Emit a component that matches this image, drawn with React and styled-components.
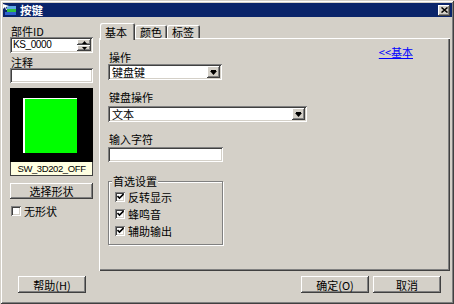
import React from 'react';
import styled, { createGlobalStyle } from 'styled-components';

const Global = createGlobalStyle`
  html, body { margin: 0; padding: 0; background: #d4d0c8; }
  body { font-family: "Noto Sans CJK SC", "Noto Sans", sans-serif; font-size: 11px; color: #000; }
  * { box-sizing: border-box; }
`;

const raised = `box-shadow: inset -1px -1px #404040, inset 1px 1px #fff, inset -2px -2px #808080, inset 2px 2px #d4d0c8;`;
const sunken = `box-shadow: inset 1px 1px #808080, inset -1px -1px #fff, inset 2px 2px #404040, inset -2px -2px #d4d0c8;`;

const Window = styled.div`
  width: 454px;
  height: 304px;
  padding: 3px 2px 2px 3px;
  background: #d4d0c8;
  box-shadow: inset 1px 1px #d4d0c8, inset -1px -1px #404040, inset 2px 2px #fff, inset -2px -2px #808080;
  display: flex;
  flex-direction: column;
`;

const TitleBar = styled.div`
  height: 14px;
  flex: none;
  background: #0a246a;
  display: flex;
  align-items: center;
  padding-right: 2px;
`;

const AppIcon = styled.svg`
  width: 14px;
  height: 12px;
  margin-right: 3px;
  flex: none;
`;

const TitleText = styled.div`
  flex: 1;
  color: #fff;
  font-weight: bold;
  font-size: 11.5px;
  line-height: 14px;
`;

const CloseButton = styled.div`
  width: 12px;
  height: 11px;
  background: #d4d0c8;
  ${raised}
  display: flex;
  align-items: center;
  justify-content: center;
`;

const Main = styled.div`
  height: 254px;
  flex: none;
  display: flex;
  padding: 6px 2px 0 7px;
`;

const LeftColumn = styled.div`
  width: 83px;
  flex: none;
  margin-right: 6px;
  padding-top: 2px;
  display: flex;
  flex-direction: column;
`;

const Label = styled.div`
  line-height: 12px;
  height: 12px;
  padding-left: 1px;
  margin-top: ${p => p.$mt || 0}px;
  white-space: nowrap;
`;

const SpinField = styled.div`
  height: 16px;
  background: #fff;
  ${sunken}
  display: flex;
  padding: 2px;
`;

const SpinText = styled.div`
  flex: 1;
  font-family: "Liberation Sans", Arial, sans-serif;
  font-size: 10px;
  letter-spacing: -0.4px;
  line-height: 12px;
  padding-left: 1px;
`;

const SpinButtons = styled.div`
  width: 14px;
  display: flex;
  flex-direction: column;
`;

const SpinBtn = styled.div`
  height: 6px;
  background: #d4d0c8;
  ${raised}
  display: flex;
  align-items: center;
  justify-content: center;
`;

const TextField = styled.div`
  height: 15px;
  width: ${p => (p.$w ? `${p.$w}px` : '100%')};
  margin-top: ${p => p.$mt || 0}px;
  background: #fff;
  ${sunken}
`;

const Preview = styled.div`
  margin-top: 5px;
  display: flex;
  flex-direction: column;
`;

const PreviewArea = styled.div`
  height: 74px;
  background: #000;
  display: flex;
  align-items: center;
  justify-content: center;
`;

const GreenKey = styled.div`
  width: 54px;
  height: 55px;
  background: #00ff00;
  border-top: 1px solid #fff;
  border-left: 2px solid #fff;
  margin-left: -3px;
`;

const ShapeName = styled.div`
  height: 14px;
  background: #ffffe1;
  border: 1px solid #404040;
  border-top: none;
  font-family: "Liberation Sans", Arial, sans-serif;
  font-size: 9.5px;
  letter-spacing: -0.4px;
  line-height: 13px;
  text-align: center;
`;

const Button = styled.div`
  width: ${p => (p.$w ? `${p.$w}px` : '100%')};
  height: ${p => p.$h || 17}px;
  margin-top: ${p => p.$mt || 0}px;
  margin-left: ${p => (p.$auto ? 'auto' : '0')};
  background: #d4d0c8;
  ${raised}
  display: flex;
  align-items: center;
  justify-content: center;
  line-height: 12px;
  white-space: nowrap;
`;

const CheckRow = styled.div`
  display: flex;
  align-items: center;
  height: ${p => p.$h || 17}px;
  margin-top: ${p => p.$mt || 0}px;
  padding-left: ${p => p.$pl || 0}px;
  line-height: 12px;
  white-space: nowrap;
`;

const CheckBox = styled.div`
  width: 10px;
  height: 10px;
  flex: none;
  margin-right: 3px;
  background: #fff;
  ${sunken}
  display: flex;
  align-items: center;
  justify-content: center;
`;

const TabArea = styled.div`
  width: 351px;
  flex: none;
  display: flex;
  flex-direction: column;
`;

const TabStrip = styled.div`
  height: 15px;
  display: flex;
  align-items: flex-start;
  padding-left: 1px;
  position: relative;
  z-index: 1;
`;

const Tab = styled.div`
  width: ${p => p.$w}px;
  height: ${p => (p.$active ? 17 : 13)}px;
  margin-top: ${p => (p.$active ? 0 : 2)}px;
  padding: ${p => (p.$active ? 4 : 2)}px 0 0 5px;
  background: #d4d0c8;
  border-radius: 2px 2px 0 0;
  box-shadow: inset 1px 1px #fff, inset -1px 0 #404040, inset -2px 0 #808080;
  line-height: 11px;
  white-space: nowrap;
`;

const Panel = styled.div`
  height: 233px;
  background: #d4d0c8;
  box-shadow: inset 1px 1px #fff, inset -1px -1px #404040, inset -2px -2px #808080;
  display: flex;
  padding: 8px 0 0 9px;
`;

const FormColumn = styled.div`
  padding-top: 5px;
  display: flex;
  flex-direction: column;
  align-items: flex-start;
`;

const Combo = styled.div`
  width: ${p => p.$w}px;
  height: 16px;
  margin-top: ${p => p.$mt || 0}px;
  background: #fff;
  ${sunken}
  display: flex;
  padding: 2px;
`;

const ComboText = styled.div`
  flex: 1;
  line-height: 12px;
  padding-left: 2px;
`;

const DropButton = styled.div`
  width: 13px;
  height: 12px;
  background: #d4d0c8;
  ${raised}
  display: flex;
  align-items: center;
  justify-content: center;
`;

const Group = styled.fieldset`
  margin: 13px 0 0;
  width: 115px;
  min-width: 0;
  padding: 0 0 5px 3px;
  border: 1px solid #808080;
  box-shadow: inset 1px 1px #fff, 1px 1px #fff;
`;

const Legend = styled.legend`
  padding: 0 1px;
  line-height: 12px;
  background: #d4d0c8;
`;

const CheckList = styled.div`
  padding: 1px 0 0 3px;
`;

const LinkColumn = styled.div`
  margin-left: auto;
  margin-right: 37px;
`;

const Link = styled.a`
  color: #0000ff;
  text-decoration: underline;
  line-height: 12px;
  display: block;
  cursor: pointer;
`;

const Footer = styled.div`
  height: 17px;
  flex: none;
  margin-top: 5px;
  display: flex;
  gap: 4px;
  padding: 0 11px 0 15px;
`;

const Arrow = ({ up }) => (
  <svg width="5" height="3" viewBox="0 0 5 3">
    <polygon points={up ? '2.5,0 5,3 0,3' : '0,0 5,0 2.5,3'} fill="#000" />
  </svg>
);

const DownArrow = () => (
  <svg width="7" height="5" viewBox="0 0 7 5">
    <polygon points="0,1 7,1 3.5,5" fill="#000" />
    <rect x="1" y="0" width="5" height="1" fill="#000" />
  </svg>
);

const Check = () => (
  <svg width="7" height="7" viewBox="0 0 7 7">
    <polyline points="0.5,3 2.5,5 6.5,1" fill="none" stroke="#000" strokeWidth="1.6" />
  </svg>
);

const Box = ({ checked }) => <CheckBox>{checked && <Check />}</CheckBox>;

export default function App() {
  return (
    <>
      <Global />
      <Window>
        <TitleBar>
          <AppIcon viewBox="0 0 14 12">
            <rect x="4" y="2" width="9" height="3" fill="#5fa8e8" />
            <rect x="4" y="5" width="9" height="3" fill="#30c040" />
            <rect x="2" y="8" width="11" height="3" fill="#3060d0" />
            <polygon points="0,0 6,2 3,3 4,6 3,6 2,3 0,5" fill="#fff" />
          </AppIcon>
          <TitleText>按键</TitleText>
          <CloseButton>
            <svg width="7" height="6" viewBox="0 0 7 6">
              <path d="M0.5 0.5 L6.5 5.5 M6.5 0.5 L0.5 5.5" stroke="#000" strokeWidth="1.5" />
            </svg>
          </CloseButton>
        </TitleBar>

        <Main>
          <LeftColumn>
            <Label>部件ID</Label>
            <SpinField>
              <SpinText>KS_0000</SpinText>
              <SpinButtons>
                <SpinBtn><Arrow up /></SpinBtn>
                <SpinBtn><Arrow /></SpinBtn>
              </SpinButtons>
            </SpinField>
            <Label $mt={3}>注释</Label>
            <TextField />
            <Preview>
              <PreviewArea>
                <GreenKey />
              </PreviewArea>
              <ShapeName>SW_3D202_OFF</ShapeName>
            </Preview>
            <Button $h={16} $mt={7}>选择形状</Button>
            <CheckRow $h={12} $mt={6} $pl={1}>
              <Box />
              无形状
            </CheckRow>
          </LeftColumn>

          <TabArea>
            <TabStrip>
              <Tab $active $w={35}>基本</Tab>
              <Tab $w={32}>颜色</Tab>
              <Tab $w={33}>标签</Tab>
            </TabStrip>
            <Panel>
              <FormColumn>
                <Label>操作</Label>
                <Combo $w={114} $mt={1}>
                  <ComboText>键盘键</ComboText>
                  <DropButton><DownArrow /></DropButton>
                </Combo>
                <Label $mt={11}>键盘操作</Label>
                <Combo $w={199} $mt={3}>
                  <ComboText>文本</ComboText>
                  <DropButton><DownArrow /></DropButton>
                </Combo>
                <Label $mt={11}>输入字符</Label>
                <TextField $w={115} $mt={2} />
                <Group>
                  <Legend>首选设置</Legend>
                  <CheckList>
                    <CheckRow><Box checked />反转显示</CheckRow>
                    <CheckRow><Box checked />蜂鸣音</CheckRow>
                    <CheckRow><Box checked />辅助输出</CheckRow>
                  </CheckList>
                </Group>
              </FormColumn>
              <LinkColumn>
                <Link>&lt;&lt;基本</Link>
              </LinkColumn>
            </Panel>
          </TabArea>
        </Main>

        <Footer>
          <Button $w={68}>帮助(H)</Button>
          <Button $w={68} $auto>确定(O)</Button>
          <Button $w={68}>取消</Button>
        </Footer>
      </Window>
    </>
  );
}
